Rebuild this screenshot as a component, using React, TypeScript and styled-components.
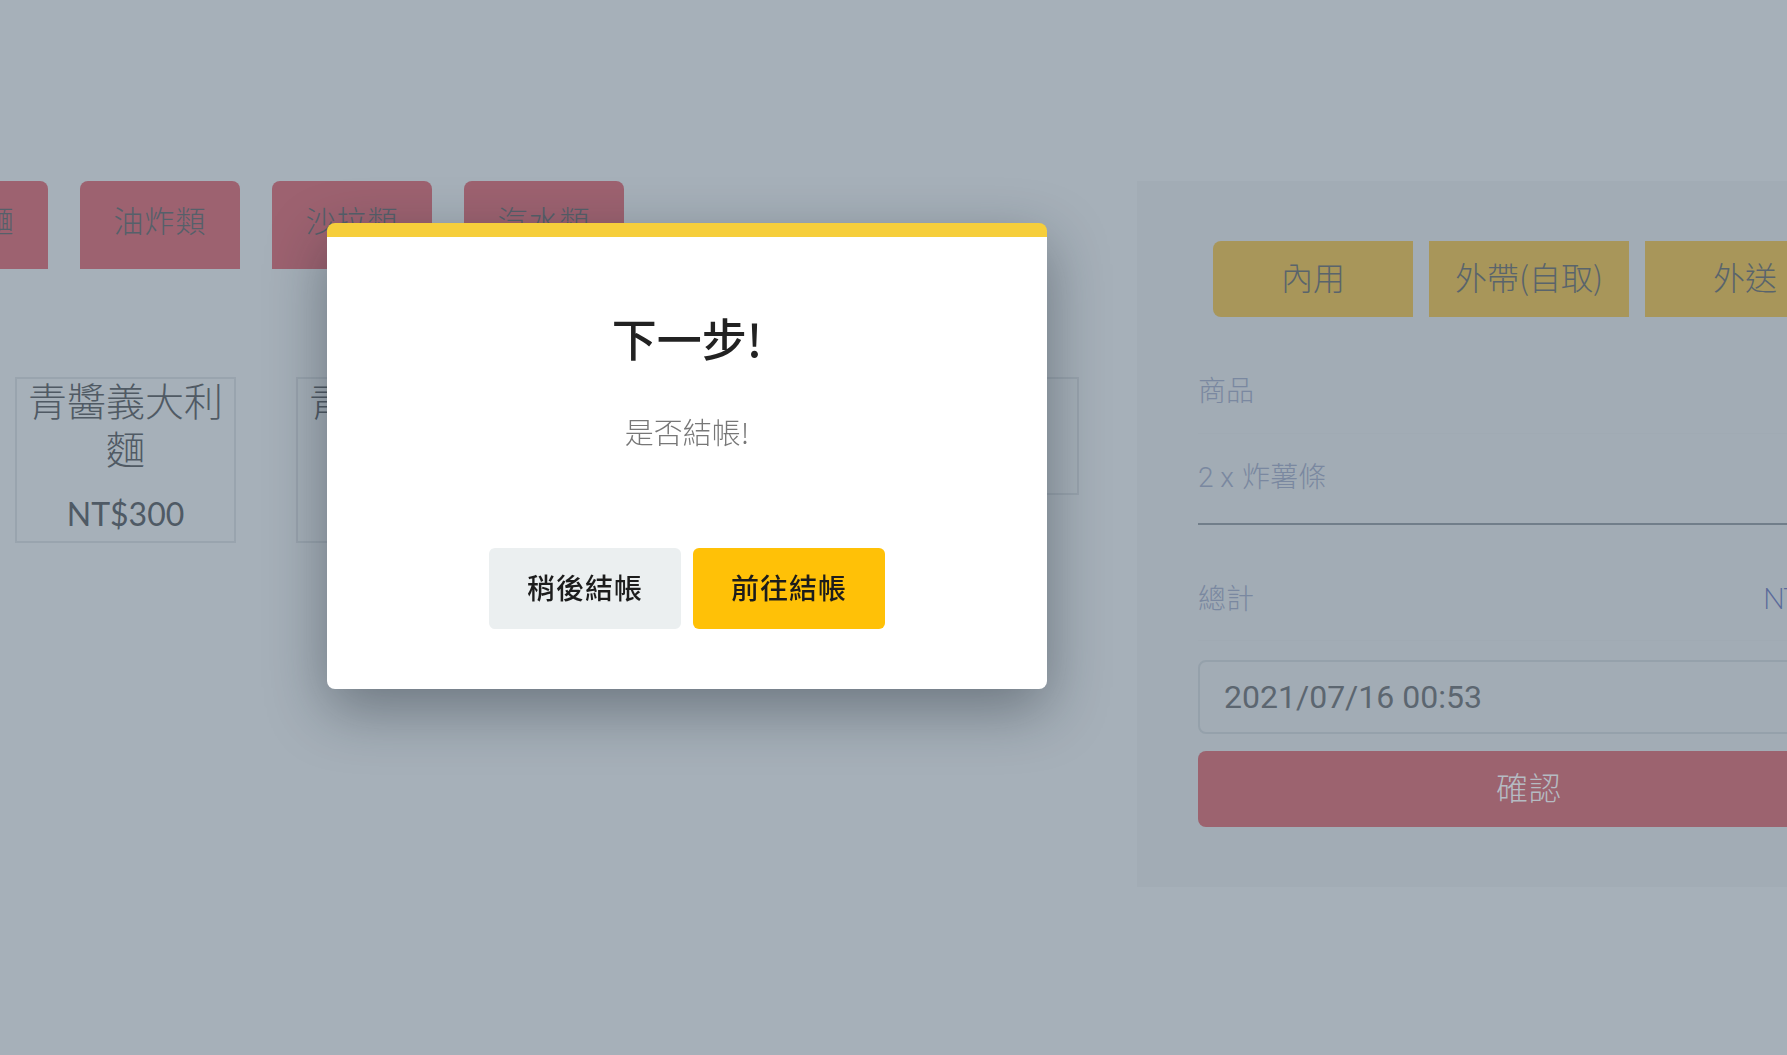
import React from "react";
import styled, { createGlobalStyle } from "styled-components";

const CJK = `"Noto Sans CJK TC", "Noto Sans CJK SC", sans-serif`;

const GlobalStyle = createGlobalStyle`
  html, body {
    margin: 0;
    padding: 0;
  }
  body {
    font-family: ${CJK};
    background: #a6b0b9;
    overflow: hidden;
  }
  * { box-sizing: border-box; }
`;

const Page = styled.div`
  width: 100vw;
  height: 100vh;
  overflow: hidden;
  display: flex;
  align-items: flex-start;
  padding-top: 181px;
  background: #a6b0b9;
`;

const MenuColumn = styled.section`
  width: 1137px;
  flex-shrink: 0;
  overflow: hidden;
`;

const CategoryRow = styled.nav`
  display: flex;
  gap: 32px;
  margin-left: -112px;
`;

const CategoryButton = styled.button`
  width: 160px;
  height: 88px;
  flex-shrink: 0;
  border: none;
  border-radius: 8px 8px 0 0;
  background: #9d6270;
  color: #55606a;
  font-family: ${CJK};
  font-size: 30px;
  font-weight: 300;
  line-height: 1;
  padding: 0 0 12px;
  letter-spacing: 1px;
`;

const CardRow = styled.div`
  display: flex;
  align-items: flex-start;
  gap: 60px;
  padding-left: 15px;
  margin-top: 108px;
`;

const Card = styled.div`
  width: 221px;
  flex-shrink: 0;
  border: 2px solid #99a4ae;
  padding: 0 0 7px;
  text-align: center;
`;

const CardName = styled.div`
  margin-top: -4px;
  font-family: ${CJK};
  font-size: 39px;
  font-weight: 300;
  line-height: 48px;
  color: #505a64;
`;

const CardPrice = styled.div`
  margin-top: 23px;
  font-family: "Lato", "Open Sans", sans-serif;
  font-size: 32px;
  line-height: 40px;
  color: #4f5a65;
`;

const OrderPanel = styled.aside`
  width: 784px;
  height: 706px;
  flex-shrink: 0;
  background: #a2acb5;
  padding: 60px 61px;
`;

const OrderTypes = styled.div`
  display: flex;
  gap: 16px;
  padding-left: 15px;
`;

const OrderTypeButton = styled.button<{ $pos: "first" | "mid" | "last" }>`
  width: 200px;
  height: 76px;
  flex-shrink: 0;
  border: none;
  background: #a8965a;
  color: #59646c;
  font-family: ${CJK};
  font-size: 32px;
  font-weight: 300;
  padding: 0 0 6px;
  border-radius: ${(p) =>
    p.$pos === "first" ? "8px 0 0 8px" : p.$pos === "last" ? "0 8px 8px 0" : "0"};
`;

const ListRow = styled.div<{ $pt: number; $pb: number; $strong?: boolean }>`
  display: flex;
  justify-content: space-between;
  align-items: center;
  padding-top: ${(p) => p.$pt}px;
  padding-bottom: ${(p) => p.$pb}px;
  border-bottom: ${(p) => (p.$strong ? "2px solid #717e8a" : "1px solid #a0aab3")};
  font-family: ${CJK};
  font-size: 28px;
  font-weight: 300;
  line-height: 40px;
  color: #7a88a0;
`;

const HeaderRow = styled(ListRow)`
  margin-top: 52px;
`;

const Quantity = styled.span`
  font-family: "Roboto", sans-serif;
  line-height: 1;
  margin-right: 2px;
`;

const Total = styled.span`
  font-family: "Lato", "Open Sans", sans-serif;
  font-size: 29px;
  line-height: 1;
  letter-spacing: -1.5px;
  color: #5a6a9a;
`;

const DateInput = styled.input`
  display: block;
  width: 100%;
  height: 74px;
  margin-top: 19px;
  border: 2px solid #95a1ab;
  border-radius: 8px;
  background: #a2acb5;
  padding: 0 24px;
  font-family: "Roboto", sans-serif;
  font-size: 32px;
  color: #5c6670;
  outline: none;
`;

const ConfirmButton = styled.button`
  display: block;
  width: 100%;
  height: 76px;
  margin-top: 17px;
  border: none;
  border-radius: 8px;
  background: #9c636f;
  color: #b5bbc2;
  font-family: ${CJK};
  font-size: 32px;
  font-weight: 300;
  letter-spacing: 1px;
  padding: 0 0 6px;
`;

const Modal = styled.div`
  position: fixed;
  left: 327px;
  top: 223px;
  width: 720px;
  height: 466px;
  background: #fff;
  border-top: 14px solid #f6ce3b;
  border-radius: 8px;
  box-shadow: 0 20px 60px rgba(20, 30, 40, 0.4);
  display: flex;
  flex-direction: column;
  align-items: center;
`;

const ModalTitle = styled.h2`
  margin: 74px 0 0;
  font-family: ${CJK};
  font-size: 45px;
  font-weight: 500;
  line-height: 54px;
  color: #222;
`;

const ModalText = styled.p`
  margin: 46px 0 0;
  font-family: ${CJK};
  font-size: 29px;
  font-weight: 300;
  line-height: 40px;
  color: #777;
`;

const ModalActions = styled.div`
  display: flex;
  gap: 12px;
  margin-top: 97px;
`;

const ModalButton = styled.button<{ $primary?: boolean }>`
  width: 192px;
  height: 81px;
  border: none;
  border-radius: 6px;
  background: ${(p) => (p.$primary ? "#ffc107" : "#ebeff0")};
  color: #1c1c1c;
  font-family: ${CJK};
  font-size: 28px;
  font-weight: 500;
  letter-spacing: 1px;
  padding: 0 0 4px;
`;

const categories = ["義式麵", "油炸類", "沙拉類", "汽水類"];
const products = [
  { name: "青醬義大利麵", price: "NT$300" },
  { name: "青醬培根義大利麵", price: "NT$320" },
  { name: "紅醬雞肉", price: "NT$280" },
  { name: "白醬燉飯", price: "NT$260" },
];

export default function App() {
  return (
    <>
      <GlobalStyle />
      <Page>
        <MenuColumn>
          <CategoryRow>
            {categories.map((c) => (
              <CategoryButton key={c}>{c}</CategoryButton>
            ))}
          </CategoryRow>
          <CardRow>
            {products.map((p) => (
              <Card key={p.name}>
                <CardName>{p.name}</CardName>
                <CardPrice>{p.price}</CardPrice>
              </Card>
            ))}
          </CardRow>
        </MenuColumn>
        <OrderPanel>
          <OrderTypes>
            <OrderTypeButton $pos="first">內用</OrderTypeButton>
            <OrderTypeButton $pos="mid">外帶(自取)</OrderTypeButton>
            <OrderTypeButton $pos="last">外送</OrderTypeButton>
          </OrderTypes>
          <HeaderRow $pt={0} $pb={24}>
            <span>商品</span>
          </HeaderRow>
          <ListRow $pt={21} $pb={28} $strong>
            <span>
              <Quantity>2 x</Quantity> 炸薯條
            </span>
          </ListRow>
          <ListRow $pt={52} $pb={23}>
            <span>總計</span>
            <Total>NT$100</Total>
          </ListRow>
          <DateInput readOnly value="2021/07/16 00:53" />
          <ConfirmButton>確認</ConfirmButton>
        </OrderPanel>
      </Page>
      <Modal role="dialog">
        <ModalTitle>下一步!</ModalTitle>
        <ModalText>是否結帳!</ModalText>
        <ModalActions>
          <ModalButton>稍後結帳</ModalButton>
          <ModalButton $primary>前往結帳</ModalButton>
        </ModalActions>
      </Modal>
    </>
  );
}
